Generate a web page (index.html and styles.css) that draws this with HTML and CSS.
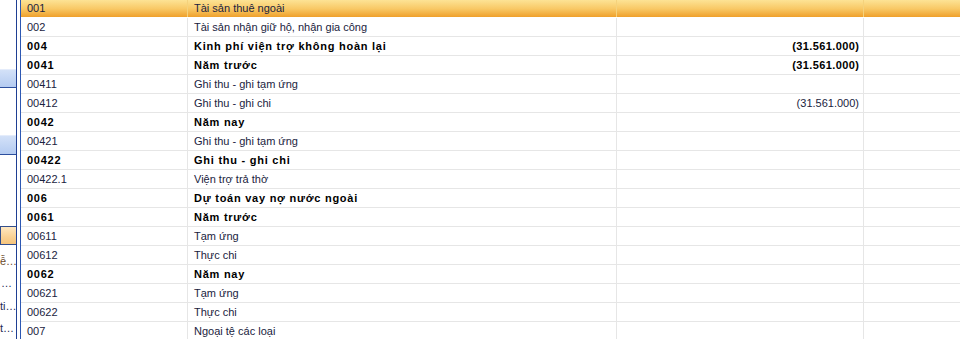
FILE: index.html
```html
<!DOCTYPE html>
<html lang="vi">
<head>
<meta charset="utf-8">
<title>Danh mục tài khoản ngoài bảng</title>
<link rel="stylesheet" href="styles.css">
</head>
<body>
<div class="app">
  <aside class="nav">
    <div class="nav-bar nav-bar-1"></div>
    <div class="nav-bar nav-bar-2"></div>
    <div class="nav-sel"></div>
    <div class="nav-label nav-label-1">ễ…</div>
    <div class="nav-label">…</div>
    <div class="nav-label">ti…</div>
    <div class="nav-label">t…</div>
  </aside>
  <main class="grid">
    <div class="row selected"><div class="c code">001</div><div class="c name">Tài sản thuê ngoài</div><div class="c amt"></div><div class="c last"></div></div>
    <div class="row"><div class="c code">002</div><div class="c name">Tài sản nhận giữ hộ, nhận gia công</div><div class="c amt"></div><div class="c last"></div></div>
    <div class="row bold"><div class="c code">004</div><div class="c name">Kinh phí viện trợ không hoàn lại</div><div class="c amt">(31.561.000)</div><div class="c last"></div></div>
    <div class="row bold"><div class="c code">0041</div><div class="c name">Năm trước</div><div class="c amt">(31.561.000)</div><div class="c last"></div></div>
    <div class="row"><div class="c code">00411</div><div class="c name">Ghi thu - ghi tạm ứng</div><div class="c amt"></div><div class="c last"></div></div>
    <div class="row"><div class="c code">00412</div><div class="c name">Ghi thu - ghi chi</div><div class="c amt">(31.561.000)</div><div class="c last"></div></div>
    <div class="row bold"><div class="c code">0042</div><div class="c name">Năm nay</div><div class="c amt"></div><div class="c last"></div></div>
    <div class="row"><div class="c code">00421</div><div class="c name">Ghi thu - ghi tạm ứng</div><div class="c amt"></div><div class="c last"></div></div>
    <div class="row bold"><div class="c code">00422</div><div class="c name">Ghi thu - ghi chi</div><div class="c amt"></div><div class="c last"></div></div>
    <div class="row"><div class="c code">00422.1</div><div class="c name">Viện trợ trả thờ</div><div class="c amt"></div><div class="c last"></div></div>
    <div class="row bold"><div class="c code">006</div><div class="c name">Dự toán vay nợ nước ngoài</div><div class="c amt"></div><div class="c last"></div></div>
    <div class="row bold"><div class="c code">0061</div><div class="c name">Năm trước</div><div class="c amt"></div><div class="c last"></div></div>
    <div class="row"><div class="c code">00611</div><div class="c name">Tạm ứng</div><div class="c amt"></div><div class="c last"></div></div>
    <div class="row"><div class="c code">00612</div><div class="c name">Thực chi</div><div class="c amt"></div><div class="c last"></div></div>
    <div class="row bold"><div class="c code">0062</div><div class="c name">Năm nay</div><div class="c amt"></div><div class="c last"></div></div>
    <div class="row"><div class="c code">00621</div><div class="c name">Tạm ứng</div><div class="c amt"></div><div class="c last"></div></div>
    <div class="row"><div class="c code">00622</div><div class="c name">Thực chi</div><div class="c amt"></div><div class="c last"></div></div>
    <div class="row"><div class="c code">007</div><div class="c name">Ngoại tệ các loại</div><div class="c amt"></div><div class="c last"></div></div>
  </main>
</div>
</body>
</html>
```
FILE: styles.css
```css
html, body {
  margin: 0;
  padding: 0;
  background: #ffffff;
  overflow: hidden;
}
body {
  font-family: "Liberation Sans", Arial, sans-serif;
  font-size: 11px;
  color: #1a2340;
}
.app {
  display: flex;
  height: 339px;
  overflow: hidden;
}
.nav {
  width: 16px;
  flex: none;
  border-right: 1px solid #1f3f93;
  display: flex;
  flex-direction: column;
  background: #ffffff;
  margin-right: 3px;
}
.nav-bar {
  height: 18px;
  border-top: 1px solid #e4ecfb;
  border-bottom: 1px solid #2c4f9e;
  background: linear-gradient(#d3e1f8, #b4cbf1);
}
.nav-bar-1 { margin-top: 69px; }
.nav-bar-2 { margin-top: 47px; }
.nav-sel {
  margin-top: 71px;
  height: 18px;
  border: 1px solid #324e8c;
  border-right: none;
  background: linear-gradient(#fee8c2, #f9d193 60%, #f6c47c);
}
.nav-label {
  height: 23px;
  line-height: 23px;
  text-align: right;
  padding-right: 4px;
  color: #1b2b55;
  white-space: nowrap;
  overflow: hidden;
}
.nav-label-1 {
  margin-top: 5px;
  color: #6b4a2a;
}
.grid {
  flex: 1;
  border-left: 1px solid #2d58b3;
  margin-top: -1px;
  display: flex;
  flex-direction: column;
}
.row {
  display: grid;
  grid-template-columns: 167px 429px 247px 1fr;
  height: 18px;
  border-bottom: 1px solid #e6e6e6;
  flex: none;
}
.row.selected {
  background: linear-gradient(#fde69a, #f8c865 55%, #efa02b);
  border-bottom-color: #ffffff;
}
.c {
  line-height: 16px;
  padding-top: 1px;
  white-space: nowrap;
  overflow: hidden;
  border-right: 1px solid #e6e6e6;
}
.selected .c {
  border-right-color: #f5d27c;
}
.code, .name {
  padding-left: 6px;
}
.amt {
  text-align: right;
  padding-right: 4px;
}
.last {
  border-right: none;
}
.row.bold .c {
  font-weight: bold;
  color: #000000;
  letter-spacing: 0.75px;
}
.row.bold .amt {
  letter-spacing: 0.4px;
  padding-right: 3.6px;
}
```
